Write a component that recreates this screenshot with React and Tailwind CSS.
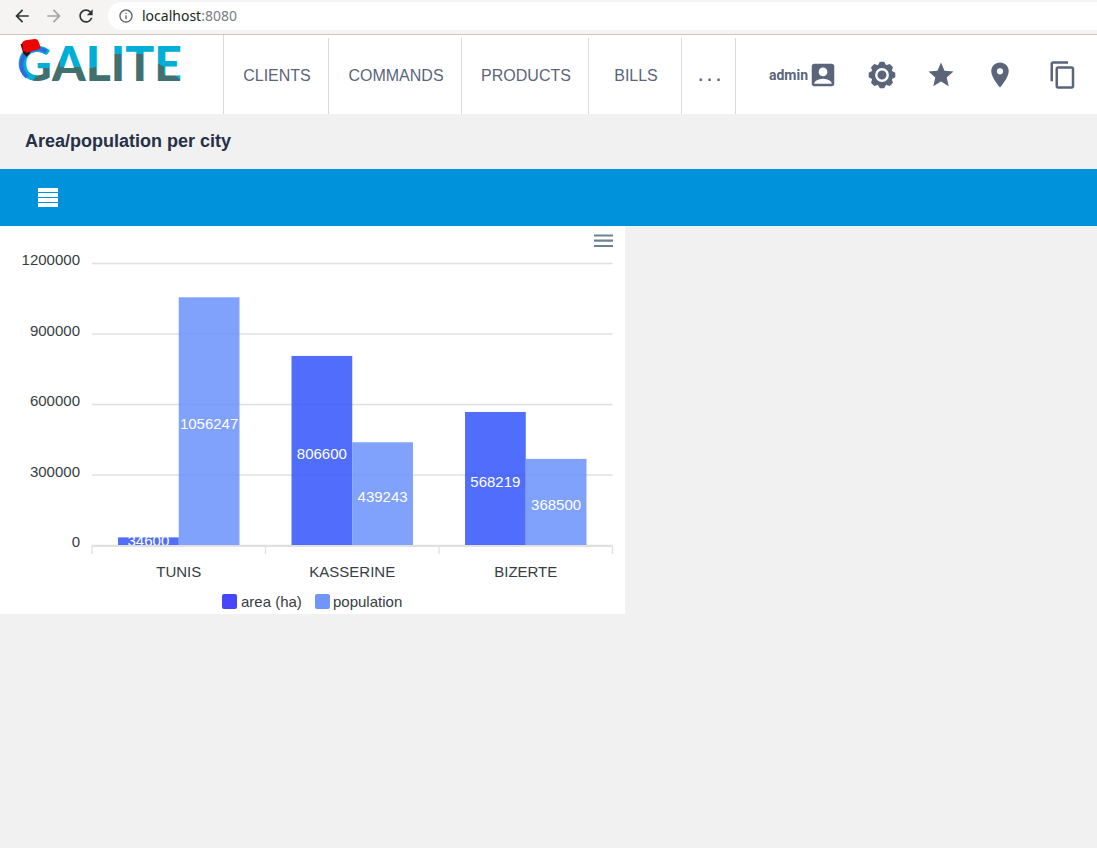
import {
  MdAccountBox,
  MdArrowBack,
  MdArrowForward,
  MdContentCopy,
  MdInfoOutline,
  MdPlace,
  MdRefresh,
  MdStar,
} from "react-icons/md";

function BrowserBar() {
  return (
    <div className="flex h-[35px] items-start border-b border-[#cdc7bf] bg-[#f5f4f2] pt-0.5 pl-3">
      <div className="flex h-7 items-center gap-3 text-[#2e3436]">
        <button type="button" aria-label="Back"><MdArrowBack size={20} /></button>
        <button type="button" aria-label="Forward" className="text-[#a3a4a3]"><MdArrowForward size={20} /></button>
        <button type="button" aria-label="Reload"><MdRefresh size={20} /></button>
      </div>
      <div className="ml-3 flex h-7 flex-1 items-center gap-2 rounded-l-full bg-white pl-2.5 font-['Noto_Sans',sans-serif] text-sm text-[#1c1f20]">
        <MdInfoOutline size={16} className="text-[#5f6368]" />
        <span>localhost<span className="text-[#7a7c7e]">:8080</span></span>
      </div>
    </div>
  );
}

function Logo() {
  return (
    <svg width="170" height="66" viewBox="15 36 170 66" className="overflow-visible" role="img" aria-label="Galite">
      <defs>
        <pattern id="two-tone" patternUnits="userSpaceOnUse" x="0" y="0" width="200" height="110">
          <rect width="200" height="110" fill="#00aed6" />
          <path d="M52 61h8v6h21v1h12v-1h20V54h41v8l5 2 5 3v7h9l8 6v10H52z" fill="#42706f" />
        </pattern>
        <pattern id="g-tone" patternUnits="userSpaceOnUse" x="0" y="0" width="200" height="110">
          <rect width="60" height="110" fill="#00aed6" />
          <path d="M28 90l5-10 7-9 2-3h14v22z" fill="#42706f" />
        </pattern>
      </defs>
      <g fontFamily="Lato, sans-serif" fontSize="48" fontWeight="900">
        <text x="17" y="81" fill="url(#g-tone)">G</text>
        <text x="52" y="81" fill="url(#two-tone)">ALITE</text>
      </g>
      <path d="M46.500 51.500q-8-5-16-1c-8 4-11 13-8 20q1.500 4 4.500 6.500" fill="none" stroke="#2f6bdc" strokeWidth="4" />
      <path d="M20.500 44.500l5-3 7 9-7.500 4.500-1.500-1z" fill="#4a0a0a" />
      <path d="M22 43q1-2.200 3.500-2.700l9-1.300q3-.3 3.700 1.800l2 5.200q.7 2.500-2 3.300l-11 3.200q-3 .7-4-2z" fill="#ec0505" />
      <path d="M24.500 51.500l2 4 3-3" fill="none" stroke="#2b1010" strokeWidth="1.800" />
    </svg>
  );
}

function GearIcon() {
  const teeth = [0, 45, 90, 135, 180, 225, 270, 315];
  return (
    <svg width="30" height="30" viewBox="-15 -15 30 30" aria-hidden="true">
      <g fill="currentColor">
        <circle r="10.8" />
        {teeth.map((a) => (
          <path key={a} d="M-4.200-9.500L-2.200-13.300H2.200L4.200-9.500Z" transform={`rotate(${a})`} />
        ))}
      </g>
      <circle r="5.700" fill="none" stroke="#fff" strokeWidth="2.400" />
    </svg>
  );
}

function NavItem({ width, children }) {
  return (
    <a href="#" className={`${width} flex items-center justify-center border-r border-[#d9d9d9] pl-0.5`}>
      {children}
    </a>
  );
}

function Header() {
  return (
    <header className="flex h-[79px] bg-white font-['Liberation_Sans',Arial,sans-serif] text-[#5b657a]">
      <a href="#" className="w-56 border-r border-[#d9d9d9] pt-px pl-[15px]"><Logo /></a>
      <nav className="flex pt-[3px] text-base">
        <NavItem width="w-[105px]">CLIENTS</NavItem>
        <NavItem width="w-[133px]">COMMANDS</NavItem>
        <NavItem width="w-[127px]">PRODUCTS</NavItem>
        <NavItem width="w-[93px]">BILLS</NavItem>
        <NavItem width="w-[54px]"><b>. . .</b></NavItem>
      </nav>
      <div className="ml-auto flex items-center gap-[29px] pr-[19px]">
        <button type="button" className="flex items-center font-[Roboto,sans-serif] text-sm font-bold">
          admin<MdAccountBox size={30} />
        </button>
        <button type="button" aria-label="Settings"><GearIcon /></button>
        <button type="button" aria-label="Favorites"><MdStar size={30} /></button>
        <button type="button" aria-label="Location"><MdPlace size={30} /></button>
        <button type="button" aria-label="Copy" className="pl-1"><MdContentCopy size={30} /></button>
      </div>
    </header>
  );
}

const cities = [
  { name: "TUNIS", area: 34600, population: 1056247 },
  { name: "KASSERINE", area: 806600, population: 439243 },
  { name: "BIZERTE", area: 568219, population: 368500 },
];
const ticks = [0, 300000, 600000, 900000, 1200000];
const MAX = 1200000;
const LEFT = 92;
const RIGHT = 612.5;
const BASE = 319.5;
const PLOT_HEIGHT = 282;
const STEP = (RIGHT - LEFT) / cities.length;
const BAR = STEP * 0.35;
const yOf = (value) => BASE - (value / MAX) * PLOT_HEIGHT;

function Bar({ x, value, fill }) {
  const y = yOf(value);
  const labelY = Math.min((y + BASE) / 2 + 8, BASE);
  return (
    <g>
      <rect x={x} y={y} width={BAR} height={BASE - y} fill={fill} fillOpacity="0.85" />
      <text x={x + BAR / 2} y={labelY} textAnchor="middle" fill="#fff">{value}</text>
    </g>
  );
}

function Chart() {
  return (
    <section className="relative w-[625px] bg-white">
      <svg width="625" height="388" viewBox="0 0 625 388" className="block" fontFamily="Liberation Sans, Arial, sans-serif" fontSize="15" fill="#373d3f">
        {ticks.map((t) => (
          <g key={t}>
            <line x1={LEFT} x2={RIGHT} y1={yOf(t)} y2={yOf(t)} stroke="#e0e0e0" strokeWidth="1.300" />
            <text x="80" y={yOf(t) + 1.500} textAnchor="end">{t}</text>
          </g>
        ))}
        {cities.map((c, i) => {
          const mid = LEFT + STEP * (i + 0.5);
          return (
            <g key={c.name}>
              <Bar x={mid - BAR} value={c.area} fill="#3155fa" />
              <Bar x={mid} value={c.population} fill="#6a91fc" />
              <text x={mid} y="351" textAnchor="middle">{c.name}</text>
            </g>
          );
        })}
        <line x1={LEFT} x2={RIGHT} y1="320" y2="320" stroke="#e0e0e0" strokeWidth="2" />
        {[0, 1, 2, 3].map((i) => (
          <line key={i} x1={LEFT + STEP * i} x2={LEFT + STEP * i} y1="320" y2="328" stroke="#e0e0e0" strokeWidth="1.300" />
        ))}
        <rect x="222" y="368" width="15" height="15" rx="2" fill="#4747f9" />
        <text x="241" y="381">area (ha)</text>
        <rect x="315" y="368" width="15" height="15" rx="2" fill="#7095fb" />
        <text x="333" y="381">population</text>
      </svg>
      <button type="button" aria-label="Chart menu" className="absolute top-1.5 right-3 text-[#6e8192]">
        <svg width="20" height="18" viewBox="0 0 20 18" className="block" fill="none" stroke="currentColor" strokeWidth="2.200">
          <path d="M1 3.500h19.500M1 8.700h19.500M1 14h19.500" />
        </svg>
      </button>
    </section>
  );
}

export default function App() {
  return (
    <div className="min-h-screen bg-[#f1f1f1] font-['Liberation_Sans',Arial,sans-serif]">
      <BrowserBar />
      <Header />
      <main>
        <h1 className="flex h-[55px] items-center pb-0.5 pl-[25px] text-lg font-bold text-[#263047]">
          Area/population per city
        </h1>
        <div className="flex h-[57px] items-center bg-[#0093db] pl-[38px]">
          <button type="button" aria-label="List view" className="flex w-5 flex-col gap-px">
            <span className="h-1 bg-white" />
            <span className="h-1 bg-white" />
            <span className="h-1 bg-white" />
            <span className="h-1 bg-white" />
          </button>
        </div>
        <Chart />
      </main>
    </div>
  );
}
